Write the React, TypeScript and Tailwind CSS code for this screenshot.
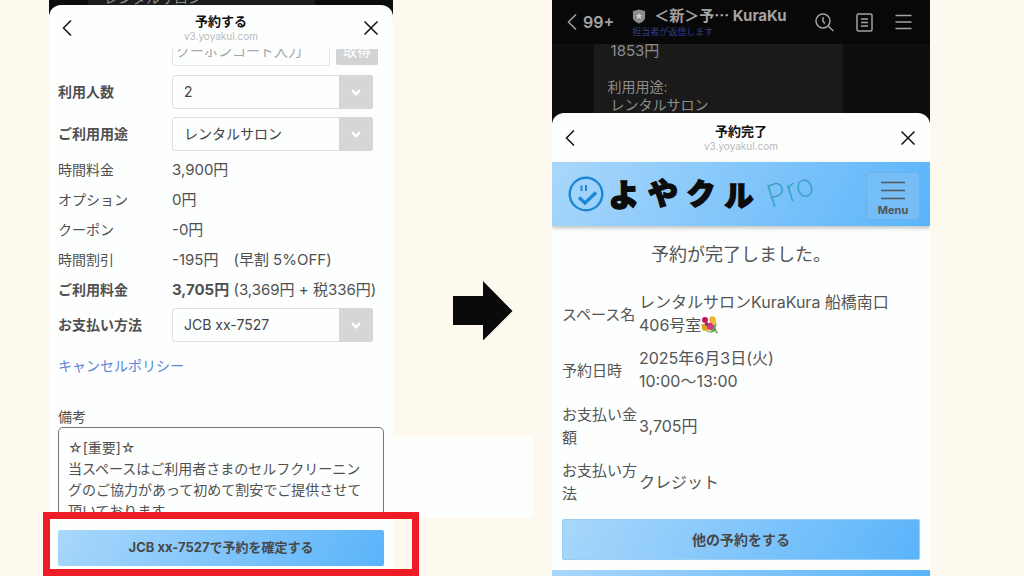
import React, { useState } from 'react';
import clsx from 'clsx';

const fees = [
  { label: '時間料金', value: '3,900円' },
  { label: 'オプション', value: '0円' },
  { label: 'クーポン', value: '-0円' },
  { label: '時間割引', value: '-195円　(早割 5%OFF)' },
];

const memo = `☆[重要]☆
当スペースはご利用者さまのセルフクリーニングのご協力があって初めて割安でご提供させて頂いております。`;

const BackIcon = ({ className }: { className?: string }) => (
  <svg viewBox="0 0 10 16" className={clsx('w-[10px] h-4', className)} fill="none" stroke="currentColor" strokeWidth="1.5">
    <path d="M9 0.5 1.5 8 9 15.5" />
  </svg>
);

const CloseIcon = () => (
  <svg viewBox="0 0 14 14" className="w-[14px] h-[14px]" fill="none" stroke="currentColor" strokeWidth="1.5">
    <path d="M0.5 0.5 13.5 13.5M13.5 0.5 0.5 13.5" />
  </svg>
);

const SheetHeader = ({ title }: { title: string }) => (
  <header className="flex shrink-0 items-center justify-between px-[13px] pb-[6px] text-[#111]">
    <button type="button" aria-label="戻る" className="w-6">
      <BackIcon />
    </button>
    <div className="text-center">
      <h2 className="text-[13px] leading-4 font-bold">{title}</h2>
      <p className="text-[10px] leading-[14px] text-[#b9bbbb]">v3.yoyakul.com</p>
    </div>
    <button type="button" aria-label="閉じる" className="w-6 flex justify-end pr-[2px]">
      <CloseIcon />
    </button>
  </header>
);

type SelectRowProps = { id: string; label: string; options: string[] };

const SelectRow = ({ id, label, options }: SelectRowProps) => {
  const [value, setValue] = useState(options[0]);

  return (
    <div className="grid grid-cols-[114px_1fr] items-center">
      <label htmlFor={id} className="pb-[2px] font-bold">{label}</label>
      <div className="relative mr-[11px]">
        <select
          id={id}
          value={value}
          onChange={(e) => setValue(e.target.value)}
          className="block w-full h-[34px] appearance-none rounded-[3px] border border-[#dfe0e0] bg-transparent pl-[11px] pr-9 pb-[2px] text-[14px] text-[#444]"
        >
          {options.map((o) => (
            <option key={o}>{o}</option>
          ))}
        </select>
        <span className="pointer-events-none absolute inset-y-0 right-0 flex w-[34px] items-center justify-center rounded-r-[3px] bg-[#d6d6d6] text-white">
          <svg viewBox="0 0 10 7" className="w-[10px] h-[7px]" fill="none" stroke="currentColor" strokeWidth="2.4">
            <path d="M1 1.2 5 5.2 9 1.2" />
          </svg>
        </span>
      </div>
    </div>
  );
};

const BookingForm = () => (
  <section className="relative flex h-screen flex-col bg-[#0d0d0d]">
    {/* Dimmed chat behind the sheet */}
    <div className="h-[5px] overflow-hidden">
      <p className="ml-[39px] -mt-[9px] w-[66%] bg-[#1c1c1c] pl-4 text-[14px] leading-[14px] text-[#8a8a8a]">レンタルサロン</p>
    </div>

    <div className="flex min-h-0 flex-1 flex-col rounded-t-xl bg-[#fdfefe] pt-2">
      <SheetHeader title="予約する" />
      <form className="flex min-h-0 flex-1 flex-col" onSubmit={(e) => e.preventDefault()}>
        <div className="min-h-0 flex-1 overflow-hidden px-[9px] text-[14px] text-[#505050]">
          <div className="-mt-[17px] flex gap-[6px] pl-[114px] pr-[6px] text-[14px]">
            <input
              aria-label="クーポンコード入力"
              placeholder="クーポンコード入力"
              className="h-[34px] min-w-0 flex-1 rounded-[3px] border border-[#e2e3e3] px-[3px] pt-[2px] text-[14px] placeholder:text-[#a5a7a7]"
            />
            <button type="button" className="h-[33px] w-[42px] rounded-[2px] bg-[#d3d3d3] pt-[3px] text-white">取得</button>
          </div>

          <div className="mt-[9px] flex flex-col gap-2">
            <SelectRow id="people" label="利用人数" options={['2', '1', '3']} />
            <SelectRow id="usage" label="ご利用用途" options={['レンタルサロン']} />
          </div>

          <dl className="mt-1 mb-[3px] leading-[30px]">
            {fees.map((f) => (
              <div key={f.label} className="grid grid-cols-[114px_1fr]">
                <dt>{f.label}</dt>
                <dd className="text-[15px]">{f.value}</dd>
              </div>
            ))}
            <div className="grid grid-cols-[114px_1fr]">
              <dt className="font-bold">ご利用料金</dt>
              <dd className="whitespace-nowrap text-[15px]">
                <b>3,705円</b> (3,369円 + 税336円)
              </dd>
            </div>
          </dl>

          <SelectRow id="payment" label="お支払い方法" options={['JCB xx-7527']} />

          <a href="#policy" className="mt-3 block leading-6 text-[#5b84d8]">キャンセルポリシー</a>

          <label htmlFor="memo" className="mt-[29px] block leading-5">備考</label>
          <textarea
            id="memo"
            readOnly
            value={memo}
            className="block h-32 w-full resize-none overflow-hidden rounded-[5px] border border-[#777] px-[9px] py-[9px] text-[14px] leading-[21px] text-[#505050]"
          />
        </div>
        <div className="px-[9px] pt-[18px] pb-[10px]">
          <button type="submit" className="block h-9 w-full rounded-[2px] bg-linear-[120deg] from-[#a9d7fb] to-[#5ab4fa] text-[13px] font-bold text-[#484848]">
            JCB xx-7527で予約を確定する
          </button>
        </div>
      </form>
    </div>

    {/* Highlight over the confirm button */}
    <div className="pointer-events-none absolute -left-[6px] -right-[26px] bottom-0 z-10 h-16 border-[7px] border-[#ee1c24]" />
  </section>
);

const Bouquet = () => (
  <svg viewBox="0 0 18 18" className="inline-block h-[18px] w-[18px] align-[-3px]">
    <path d="M9 9 16.5 17M7 11 13 15.5M11 9l4 5" stroke="#5b9a3c" strokeWidth="1.6" fill="none" />
    <path d="M3 13c3 3 7 3 10 1l-1 2c-3 1.5-7 0-9-3zM14 5c2 2 2 5 0 8l-2-3z" fill="#6aa84f" />
    <path d="M0.5 8h6l3 6.5H1.5z" fill="#e0a21c" />
    <circle cx="4" cy="4" r="3" fill="#c2185b" />
    <circle cx="11.5" cy="3.5" r="3.2" fill="#f0b429" />
    <circle cx="9.5" cy="10" r="3.6" fill="#d6338a" />
    <circle cx="5.5" cy="8" r="1.8" fill="#8e2a63" />
    <circle cx="13" cy="7.5" r="1.8" fill="#e7c52c" />
  </svg>
);

const Logo = () => (
  <svg viewBox="0 0 256 50" className="h-[50px] w-[256px] shrink-0" role="img" aria-label="よやクル Pro">
    <g fill="none" stroke="#1b87d3">
      <circle cx="18" cy="25" r="16.3" strokeWidth="2.4" />
      <path d="M13.5 16.5v5.5M18 16v6" strokeWidth="2" />
      <path d="M11 28.5 17 34 28 23.5" strokeWidth="3.4" />
    </g>
    <g fill="#0c0c0c" stroke="#0c0c0c" strokeWidth="1.4" fontWeight="900" textAnchor="middle">
      <text x="56" y="37" fontSize="31">よ</text>
      <text x="95" y="35" fontSize="30">や</text>
      <text x="133" y="36" fontSize="29">ク</text>
      <text x="171" y="38" fontSize="29">ル</text>
    </g>
    <text x="203" y="39" fontSize="31" fontWeight="200" fill="#379fbb" transform="rotate(-18 203 39)">Pro</text>
  </svg>
);

const details = [
  { label: 'スペース名', value: <>レンタルサロンKuraKura 船橋南口<br />406号室<Bouquet /></> },
  { label: '予約日時', value: <>2025年6月3日(火)<br />10:00〜13:00</> },
  { label: 'お支払い金額', value: '3,705円' },
  { label: 'お支払い方法', value: 'クレジット' },
];

const BookingDone = () => (
  <section className="flex h-screen flex-col overflow-hidden bg-[#0e0e0e]">
    <header className="flex h-11 shrink-0 items-center bg-[#080808] pl-[15px] pr-[18px] text-[#a3a3a3]">
      <button type="button" className="flex items-center gap-[6px] text-[16px] font-semibold">
        <BackIcon />
        99+
      </button>
      <div className="ml-[18px] whitespace-nowrap">
        <h1 className="flex items-center gap-2 text-[15px] leading-5 font-bold">
          <svg viewBox="0 0 14 16" className="h-[15px] w-[14px]">
            <path d="M7 0.5 13.5 2v7c0 3-3 5-6.5 6.5C3.5 14 0.5 12 0.5 9V2z" fill="#8b8b8b" />
            <path d="M7 4l1 2.4 2.5.2-1.9 1.6.6 2.5L7 9.4l-2.2 1.3.6-2.5-1.9-1.6 2.5-.2z" fill="#d0d0d0" />
          </svg>
          ＜新＞予⋯ KuraKu
        </h1>
        <p className="text-[9px] leading-3 text-[#343d84]">担当者が返信します</p>
      </div>
      <div className="ml-auto flex items-center gap-[22px]">
        <button type="button" aria-label="検索">
          <svg viewBox="0 0 19 19" className="h-[19px] w-[19px]" fill="none" stroke="currentColor" strokeWidth="1.5">
            <circle cx="8" cy="8" r="7" />
            <path d="M13 13l5.5 5M8 4v4.5l2 2" />
          </svg>
        </button>
        <button type="button" aria-label="ノート">
          <svg viewBox="0 0 17 19" className="h-[19px] w-[17px]" fill="none" stroke="currentColor" strokeWidth="1.5">
            <rect x="1" y="1" width="15" height="17" rx="1.5" />
            <path d="M5 6h7M5 9.5h7M5 13h7" />
          </svg>
        </button>
        <button type="button" aria-label="メニュー">
          <svg viewBox="0 0 17 16" className="h-4 w-[17px]" fill="none" stroke="currentColor" strokeWidth="1.5">
            <path d="M0.5 1.5h16M0.5 8h16M0.5 14.5h16" />
          </svg>
        </button>
      </div>
    </header>

    {/* Chat bubble */}
    <div className="ml-[11%] w-[66%] h-[69px] shrink-0 overflow-hidden bg-[#1a1a1a] pl-[14px] text-[14px] leading-[18px] text-[#8d8d8d]">
      <p className="-mt-[2px] pl-[3px] text-[15px] leading-[18px]">1853円</p>
      <p className="mt-[18px]">利用用途:</p>
      <p className="pl-[3px]">レンタルサロン</p>
    </div>

    <div className="flex-1 rounded-t-xl bg-[#fdfefe] pt-[10px] text-[#555]">
      <SheetHeader title="予約完了" />
      <div className="mt-[3px] flex h-16 items-center justify-between bg-linear-[120deg] from-[#a9d7fb] to-[#5ab4fa] pl-4 pr-[10px] shadow-[0_2px_4px_rgba(0,0,0,0.25)]">
        <Logo />
        <button type="button" className="mt-1 flex h-12 w-[54px] shrink-0 flex-col items-center justify-center gap-1 rounded-[3px] border border-[#67b3ea] bg-[#74bdf6] text-[11px] leading-3 font-bold">
          <svg viewBox="0 0 24 19" className="mt-1 h-[19px] w-6" stroke="currentColor" strokeWidth="1.5">
            <path d="M0 1.5h24M0 9.5h24M0 17.5h24" />
          </svg>
          Menu
        </button>
      </div>

      <h3 className="mt-4 text-center text-[18px] leading-[26px]">予約が完了しました。</h3>

      <div className="px-[10px] pt-[18px]">
        <table className="w-full text-left text-[15px] leading-[23px]">
          <tbody>
            {details.map((d) => (
              <tr key={d.label}>
                <th scope="row" className="w-[77px] py-[5px] font-normal">{d.label}</th>
                <td className="py-[5px] text-[16px] leading-[23px]">{d.value}</td>
              </tr>
            ))}
          </tbody>
        </table>
        <button type="button" className="mt-[9px] block h-[41px] w-full rounded-[2px] border border-[#9ccdf3] bg-linear-[120deg] from-[#a9d7fb] to-[#5ab4fa] text-[14px] font-bold text-[#484848]">
          他の予約をする
        </button>
      </div>
      <div className="mt-[10px] h-8 bg-linear-[100deg] from-[#a9d7fb] to-[#5ab4fa]" />
    </div>
  </section>
);

const App = () => (
  <main className="grid h-screen grid-cols-[minmax(0,344fr)_minmax(0,159fr)_minmax(0,378fr)] overflow-hidden bg-[#fef9ee] pl-[49px] pr-[94px] font-[Inter,'Noto_Sans_CJK_JP',sans-serif]">
    <BookingForm />
    <div className="flex h-screen flex-col">
      <div className="flex flex-1 items-end justify-center pl-5">
        <svg viewBox="0 0 60 60" className="h-[60px] w-[60px]" fill="#0a0a0a">
          <path d="M0 15h30V0l29.5 30L30 59.5V44H0z" />
        </svg>
      </div>
      <div className="mt-24 mr-[19px] mb-[58px] h-[81px] bg-[#fdfefe]" />
    </div>
    <BookingDone />
  </main>
);

export default App;
